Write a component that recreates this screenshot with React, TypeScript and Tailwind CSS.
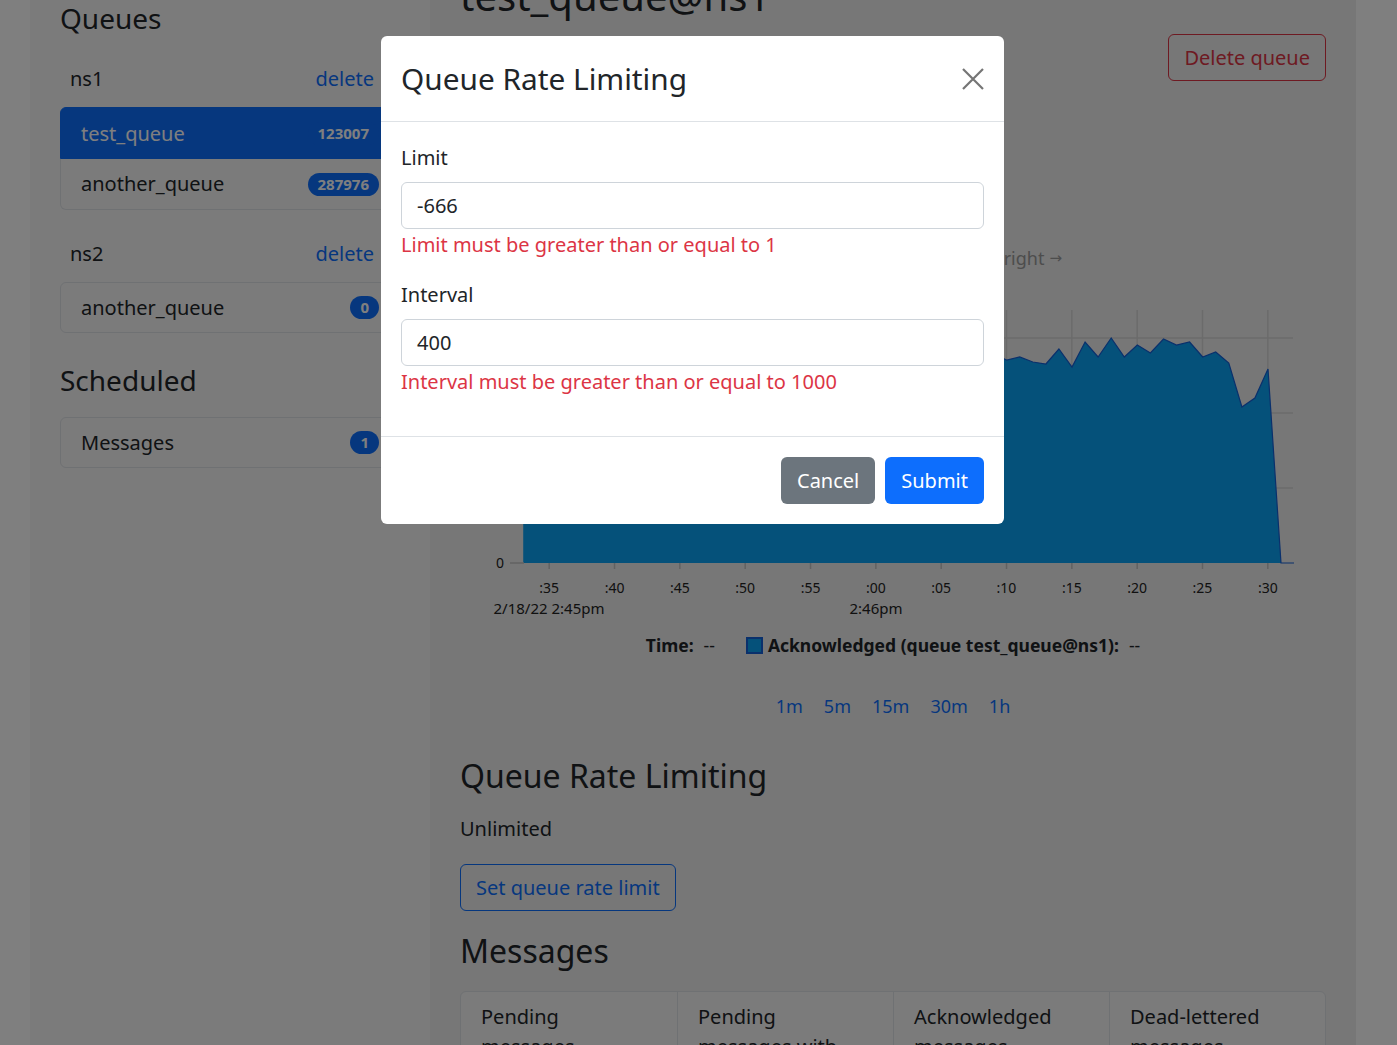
import React from "react";

const DX = 65.33 / 5;
const RIGHT = [369, 398, 407, 363, 352, 357, 342, 345, 339, 353, 345, 357, 338, 357, 342, 367, 349, 364, 362, 357, 360];

function buildPoints() {
  const pts: [number, number][] = [];
  for (let k = 57; k >= 0; k--) {
    const x = 1268 - k * DX - 460;
    const yPage = k <= 20 ? RIGHT[k] : Math.round(356 + 7 * Math.sin(k * 1.7) + 4 * Math.cos(k * 0.9));
    pts.push([x, yPage - 290]);
  }
  return pts;
}

const TICKS = [":35", ":40", ":45", ":50", ":55", ":00", ":05", ":10", ":15", ":20", ":25", ":30"];

function Chart() {
  const pts = buildPoints();
  const base = 273;
  const lastX = 1281 - 460;
  const fill =
    `M ${pts[0][0]} ${base} ` +
    pts.map((p) => `L ${p[0].toFixed(1)} ${p[1]}`).join(" ") +
    ` L ${lastX} ${base} Z`;
  const line =
    `M ${pts[0][0].toFixed(1)} ${pts[0][1]} ` +
    pts.slice(1).map((p) => `L ${p[0].toFixed(1)} ${p[1]}`).join(" ") +
    ` L ${lastX} ${base} L ${1294 - 460} ${base}`;
  return (
    <svg width={866} height={335} viewBox="0 0 866 335" className="block">
      {[48, 123, 198].map((y) => (
        <line key={y} x1={64} x2={833} y1={y} y2={y} stroke="#d6d6d6" strokeWidth={1.5} />
      ))}
      {TICKS.map((t, i) => {
        const x = 89.2 + i * 65.33;
        return <line key={t} x1={x} x2={x} y1={20} y2={base} stroke="#d6d6d6" strokeWidth={1.5} />;
      })}
      <path d={fill} fill="#0aa2f4" />
      <path d={line} fill="none" stroke="#1560d8" strokeWidth={1.2} />
      <line x1={50} x2={64} y1={base} y2={base} stroke="#c4c4c4" strokeWidth={1.5} />
      {TICKS.map((t, i) => {
        const x = 89.2 + i * 65.33;
        return (
          <g key={t + "l"}>
            <line x1={x} x2={x} y1={base} y2={base + 6} stroke="#c4c4c4" strokeWidth={1.5} />
            <text x={x} y={303} textAnchor="middle" fontSize={14} fill="#222" fontFamily="Noto Sans">
              {t}
            </text>
          </g>
        );
      })}
      <text x={44} y={278} textAnchor="end" fontSize={14} fill="#222" fontFamily="Noto Sans">0</text>
      <text x={44} y={203} textAnchor="end" fontSize={14} fill="#222" fontFamily="Noto Sans">1000</text>
      <text x={44} y={128} textAnchor="end" fontSize={14} fill="#222" fontFamily="Noto Sans">2000</text>
      <text x={44} y={53} textAnchor="end" fontSize={14} fill="#222" fontFamily="Noto Sans">3000</text>
      <text x={89} y={324} textAnchor="middle" fontSize={15} fill="#222" fontFamily="Noto Sans">2/18/22 2:45pm</text>
      <text x={416} y={324} textAnchor="middle" fontSize={15} fill="#222" fontFamily="Noto Sans">2:46pm</text>
    </svg>
  );
}

function Badge({ n }: { n: string }) {
  return (
    <span className="rounded-full bg-[#0d6efd] px-[10px] py-[4px] text-[15px] font-bold leading-none text-white">
      {n}
    </span>
  );
}

export default function App() {
  return (
    <div className="relative h-[1045px] w-[1397px] overflow-hidden bg-white font-['Noto_Sans',sans-serif] text-[#212529]">
      <div className="ml-[30px] flex h-full w-[1326px]">
        {/* Sidebar */}
        <aside className="w-[400px] shrink-0 bg-[#f7f7f7] px-[30px]">
          <h3 className="mt-[1px] text-[28px] font-normal leading-[34px]">Queues</h3>
          <div className="mt-[29px] flex justify-between pl-[10px] pr-[26px] text-[20px] leading-[30px]">
            <span>ns1</span>
            <span className="text-[#0d6efd]">delete</span>
          </div>
          <div className="mt-[13px] flex flex-col text-[20px] leading-[30px]">
            <div className="flex h-[52px] items-center justify-between rounded-t-[6px] border border-[#0d6efd] bg-[#0d6efd] px-[20px] pt-[1px] text-white">
              <span>test_queue</span>
              <Badge n="123007" />
            </div>
            <div className="flex h-[51px] items-center justify-between rounded-b-[6px] border border-t-0 border-[#dee2e6] px-[20px]">
              <span>another_queue</span>
              <Badge n="287976" />
            </div>
          </div>
          <div className="mt-[29px] flex justify-between pl-[10px] pr-[26px] text-[20px] leading-[30px]">
            <span>ns2</span>
            <span className="text-[#0d6efd]">delete</span>
          </div>
          <div className="mt-[13px] flex h-[51px] items-center justify-between rounded-[6px] border border-[#dee2e6] px-[20px] text-[20px] leading-[30px]">
            <span>another_queue</span>
            <Badge n="0" />
          </div>
          <h3 className="mt-[30px] text-[28px] font-normal leading-[34px]">Scheduled</h3>
          <div className="mt-[20px] flex h-[51px] items-center justify-between rounded-[6px] border border-[#dee2e6] px-[20px] text-[20px] leading-[30px]">
            <span>Messages</span>
            <Badge n="1" />
          </div>
        </aside>

        {/* Main */}
        <main className="flex-1 bg-[#eeeeee] px-[30px]">
          <h1 className="-mt-[28px] text-[40px] font-normal leading-[48px]">test_queue@ns1</h1>
          <div className="mt-[14px] flex justify-end">
            <button className="h-[47px] rounded-[6px] border border-[#dc3545] px-[15px] text-[20px] leading-[30px] text-[#dc3545]">
              Delete queue
            </button>
          </div>
          <div className="mt-[165px] flex justify-end pr-[264px] text-[18px] leading-[25px] text-[#9a9a9a]">
            <span>← Drag the chart to pan left/right</span>
            <span className="ml-[5px] font-['DejaVu_Sans',sans-serif] text-[15px]">→</span>
          </div>
          <div className="mt-[19px]">
            <Chart />
          </div>
          <div className="mt-[8px] flex items-center justify-center text-[17.5px] leading-[25px]">
            <span className="font-bold">Time:</span>
            <span className="ml-[10px]">--</span>
            <span className="ml-[31px] h-[17px] w-[17px] border-2 border-[#1560d8] bg-[#0aa2f4]" />
            <span className="ml-[5px] font-bold">Acknowledged (queue test_queue@ns1):</span>
            <span className="ml-[10px]">--</span>
          </div>
          <div className="mt-[35px] flex justify-center gap-[21px] text-[18px] leading-[27px] text-[#0d6efd]">
            <span>1m</span>
            <span>5m</span>
            <span>15m</span>
            <span>30m</span>
            <span>1h</span>
          </div>
          <h2 className="mt-[37px] text-[32px] font-normal leading-[38px]">Queue Rate Limiting</h2>
          <p className="mt-[19px] text-[20px] leading-[30px]">Unlimited</p>
          <button className="mt-[20px] h-[47px] rounded-[6px] border border-[#0d6efd] px-[15px] text-[20px] leading-[30px] text-[#0d6efd]">
            Set queue rate limit
          </button>
          <h2 className="mt-[21px] text-[32px] font-normal leading-[38px]">Messages</h2>
          <div className="mt-[21px] grid grid-cols-4 rounded-t-[6px] border border-[#dee2e6] bg-[#f6f6f6] text-[20px] leading-[30px]">
            <div className="px-[20px] pb-[10px] pt-[10px]">Pending<br />messages</div>
            <div className="border-l border-[#dee2e6] px-[20px] pb-[10px] pt-[10px]">Pending<br />messages with<br />delay</div>
            <div className="border-l border-[#dee2e6] px-[20px] pb-[10px] pt-[10px]">Acknowledged<br />messages</div>
            <div className="border-l border-[#dee2e6] px-[20px] pb-[10px] pt-[10px]">Dead-lettered<br />messages</div>
          </div>
        </main>
      </div>

      {/* Backdrop */}
      <div className="absolute inset-0 bg-black/50" />

      {/* Modal */}
      <div className="absolute left-[381px] top-[36px] w-[623px] rounded-[6px] bg-white">
        <div className="flex items-center justify-between border-b border-[#dee2e6] px-[20px] py-[20px]">
          <h5 className="text-[29.8px] font-normal leading-[45px]">Queue Rate Limiting</h5>
          <svg width="24" height="24" viewBox="0 0 24 24" className="mr-[-1px]">
            <path d="M2 2 L22 22 M22 2 L2 22" stroke="#757575" strokeWidth="2.2" fill="none" />
          </svg>
        </div>
        <div className="px-[20px] pb-[39px] pt-[21px] text-[20px] leading-[30px]">
          <label className="block">Limit</label>
          <div className="mt-[9px] flex h-[47px] items-center rounded-[6px] border border-[#ced4da] px-[15px]">-666</div>
          <div className="mt-[1px] text-[#dc3545]">Limit must be greater than or equal to 1</div>
          <label className="mt-[20px] block">Interval</label>
          <div className="mt-[9px] flex h-[47px] items-center rounded-[6px] border border-[#ced4da] px-[15px]">400</div>
          <div className="mt-[1px] text-[#dc3545]">Interval must be greater than or equal to 1000</div>
        </div>
        <div className="flex justify-end gap-[10px] border-t border-[#dee2e6] p-[20px] text-[20px] leading-[30px]">
          <button className="h-[47px] rounded-[6px] bg-[#6c757d] px-[16px] text-white">Cancel</button>
          <button className="h-[47px] rounded-[6px] bg-[#0d6efd] px-[16px] text-white">Submit</button>
        </div>
      </div>
    </div>
  );
}
